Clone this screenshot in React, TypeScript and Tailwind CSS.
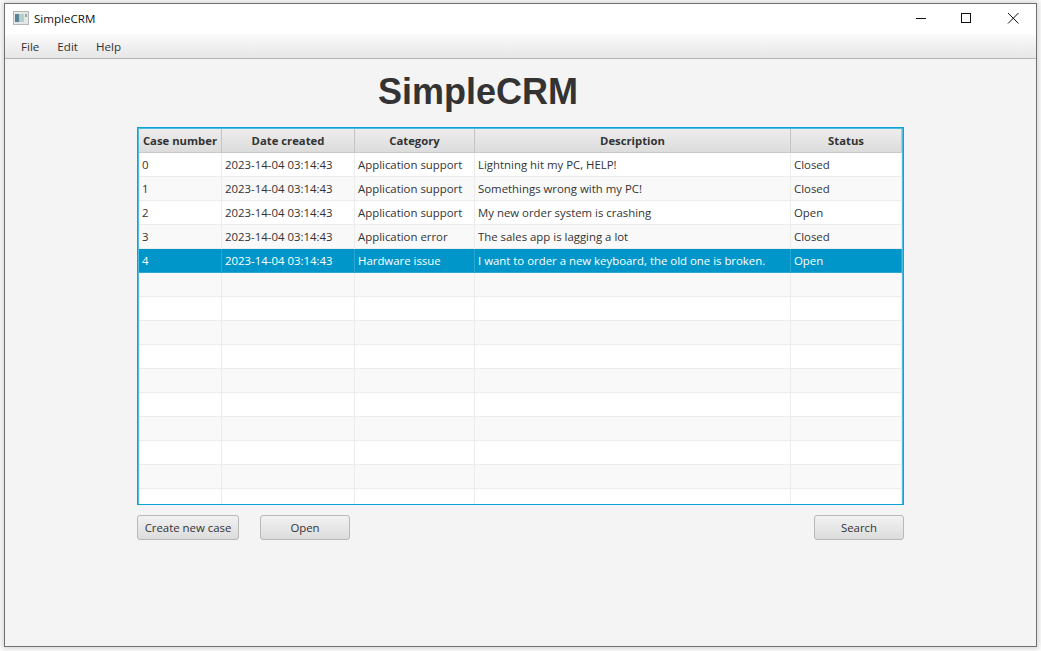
import React from "react";

const cols = ["w-[83px]", "w-[133px]", "w-[120px]", "w-[316px]", "flex-1"];
const heads = ["Case number", "Date created", "Category", "Description", "Status"];
const rows = [
  ["0", "2023-14-04 03:14:43", "Application support", "Lightning hit my PC, HELP!", "Closed"],
  ["1", "2023-14-04 03:14:43", "Application support", "Somethings wrong with my PC!", "Closed"],
  ["2", "2023-14-04 03:14:43", "Application support", "My new order system is crashing", "Open"],
  ["3", "2023-14-04 03:14:43", "Application error", "The sales app is lagging a lot", "Closed"],
  ["4", "2023-14-04 03:14:43", "Hardware issue", "I want to order a new keyboard, the old one is broken.", "Open"],
  ["", "", "", "", ""], ["", "", "", "", ""], ["", "", "", "", ""], ["", "", "", "", ""], ["", "", "", "", ""],
  ["", "", "", "", ""], ["", "", "", "", ""], ["", "", "", "", ""], ["", "", "", "", ""], ["", "", "", "", ""],
];

function Btn({ children, w }: { children: string; w: string }) {
  return (
    <button className={`${w} h-[25px] block rounded-[3px] border border-[#b8b8b8] bg-gradient-to-b from-[#f2f2f2] to-[#dcdcdc] text-[11.4px] text-[#333] leading-none`}>
      {children}
    </button>
  );
}

export default function App() {
  return (
    <div className="w-[1041px] h-[651px] bg-white overflow-hidden pl-[4px] pt-[3px] font-['Open_Sans','Noto_Sans',sans-serif]">
      <div className="w-[1033px] h-[644px] border border-[#707070] bg-[#f4f4f4] flex flex-col shadow-[0_0_6px_2px_rgba(0,0,0,0.16)]">
        <div className="h-[30px] bg-white flex items-center shrink-0">
          <svg width="16" height="14" viewBox="0 0 16 14" className="ml-[8px] mt-[-2px]">
            <rect x="0.5" y="0.5" width="15" height="13" fill="#e4e8e8" stroke="#b4b8b8" />
            <rect x="2" y="3" width="4" height="8" fill="#5a8494" />
            <rect x="6" y="3" width="5" height="8" fill="#b4d0c8" />
            <rect x="12" y="3" width="2" height="3" fill="#9aa8a8" />
          </svg>
          <span className="ml-[5px] text-[11.6px] text-[#111] mt-[-1px]">SimpleCRM</span>
          <div className="ml-auto flex items-center text-black">
            <svg width="46" height="30" viewBox="0 0 46 30"><path d="M18 14.5H28" stroke="#111" strokeWidth="1" /></svg>
            <svg width="46" height="30" viewBox="0 0 46 30"><rect x="17.5" y="9.5" width="9" height="9" fill="none" stroke="#111" /></svg>
            <svg width="46" height="30" viewBox="0 0 46 30"><path d="M18 9L28.5 19.5M28.5 9L18 19.5" stroke="#111" strokeWidth="1" /></svg>
          </div>
        </div>
        <div className="h-[25px] shrink-0 bg-gradient-to-b from-[#fbfbfb] to-[#e6e6e6] border-b border-[#b4b4b4] flex items-center pt-[2px] pl-[16px] gap-[18px] text-[11.6px] text-[#333]">
          <span>File</span>
          <span>Edit</span>
          <span>Help</span>
        </div>

        <div className="flex-1 flex flex-col pl-[132px]">
          <h1 className="w-[767px] text-center pr-[85px] h-[68px] pt-[11px] font-['Liberation_Sans',sans-serif] font-bold text-[36px] leading-[43px] text-[#333]">
            SimpleCRM
          </h1>
          <div className="w-[767px] h-[378px] border border-[#0aa5d8] shadow-[inset_0_0_0_1px_#4dbce2] bg-white flex flex-col overflow-hidden p-px">
            <div className="h-[24px] shrink-0 flex bg-gradient-to-b from-[#ededed] to-[#dcdcdc] border-b border-[#c8c8c8]">
              {heads.map((h, i) => (
                <div key={h} className={`${cols[i]} shrink-0 border-r border-[#c4c4c4] flex items-center justify-center pt-[2px] text-[11.3px] font-bold text-[#333] whitespace-nowrap`}>
                  {h}
                </div>
              ))}
            </div>
            {rows.map((r, i) => {
              const sel = i === 4;
              return (
                <div key={i} className={`h-[24px] shrink-0 flex border-b ${sel ? "bg-[#0096c9] border-[#2aa8d2] text-white" : i % 2 ? "bg-[#f9f9f9] border-[#ececec] text-[#333]" : "bg-white border-[#ececec] text-[#333]"}`}>
                  {r.map((c, j) => (
                    <div key={j} className={`${cols[j]} shrink-0 border-r ${sel ? "border-[#2aa8d2]" : "border-[#ececec]"} flex items-center pl-[3px] text-[11.4px] whitespace-nowrap`}>
                      {c}
                    </div>
                  ))}
                </div>
              );
            })}
          </div>
          <div className="w-[767px] flex items-start mt-[10px]">
            <Btn w="w-[102px]">Create new case</Btn>
            <div className="ml-[21px]"><Btn w="w-[90px]">Open</Btn></div>
            <div className="ml-auto"><Btn w="w-[90px]">Search</Btn></div>
          </div>
        </div>
      </div>
    </div>
  );
}
